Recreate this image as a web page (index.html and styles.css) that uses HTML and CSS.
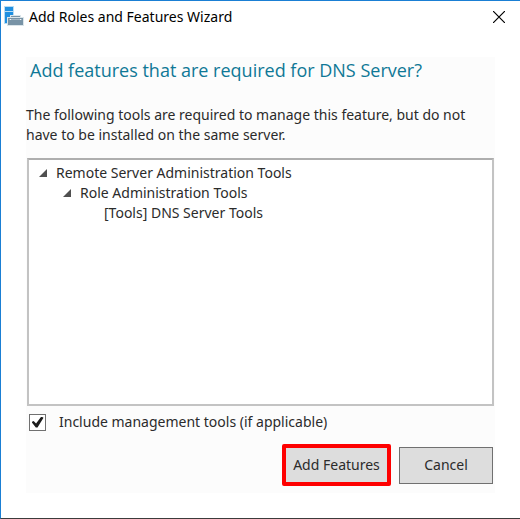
FILE: index.html
```html
<!DOCTYPE html>
<html lang="en">
<head>
<meta charset="utf-8">
<meta name="viewport" content="width=device-width, initial-scale=1">
<title>Add Roles and Features Wizard</title>
<link rel="stylesheet" href="styles.css">
</head>
<body>
<div class="window">
  <header class="titlebar">
    <svg class="app-icon" width="20" height="20" viewBox="0 0 20 20" aria-hidden="true">
      <path fill="#b9dcf3" d="M0 0h10v18H0z"/>
      <path fill="#1f8fe0" d="M1 1h8v4H1zM1 6h8v11H1z"/>
      <path fill="#dbe5ea" d="M6 9h11v2h3v9H3v-9h3z"/>
      <path fill="#7893a6" d="M7 10h9v1H7zM4 12h15v7H4z"/>
      <path fill="#a3b5c1" d="M5 13h13v1H5z"/>
      <path fill="#f3f6f8" d="M6 13h1v1H6zM16 13h1v1h-1z"/>
    </svg>
    <span class="title">Add Roles and Features Wizard</span>
    <button class="close" type="button" aria-label="Close">
      <svg width="12" height="12" viewBox="0 0 12 12" aria-hidden="true"><path d="M0 0l12 12M12 0L0 12" stroke="#000" stroke-width="1.2"/></svg>
    </button>
  </header>
  <main class="panel">
    <h1 class="heading">Add features that are required for DNS Server?</h1>
    <p class="message">The following tools are required to manage this feature, but do not have to be installed on the same server.</p>
    <div class="tree">
      <ul class="branch">
        <li>
          <div class="node"><svg class="arrow" width="8" height="8" viewBox="0 0 8 8" aria-hidden="true"><path d="M0 8L8 0v8z"/></svg>Remote Server Administration Tools</div>
          <ul class="branch">
            <li>
              <div class="node"><svg class="arrow" width="8" height="8" viewBox="0 0 8 8" aria-hidden="true"><path d="M0 8L8 0v8z"/></svg>Role Administration Tools</div>
              <ul class="branch">
                <li><div class="node leaf">[Tools] DNS Server Tools</div></li>
              </ul>
            </li>
          </ul>
        </li>
      </ul>
    </div>
    <label class="option"><input class="check" type="checkbox" checked>Include management tools (if applicable)</label>
    <div class="actions">
      <button class="button primary" type="button">Add Features</button>
      <button class="button" type="button">Cancel</button>
    </div>
  </main>
</div>
</body>
</html>
```
FILE: styles.css
```css
* {
  box-sizing: border-box;
}

body {
  margin: 0;
  background: #fff;
  color: #2b2b2b;
  font: 14px/20px "Noto Sans", "Open Sans", sans-serif;
}

button {
  font: inherit;
  color: inherit;
}

.window {
  display: flex;
  flex-direction: column;
  min-height: 100vh;
  padding: 0 25px 25px;
  border: 1px solid #1a7fd4;
  border-right: 0;
  border-bottom-color: #3c3c3c;
}

.titlebar {
  display: flex;
  align-items: center;
  height: 32px;
  margin: 0 -10px 24px -22px;
  color: #000;
}

.app-icon {
  margin: 0 5px 2px 0;
}

.title {
  flex: 1;
}

.close {
  display: flex;
  padding: 0;
  border: 0;
  background: none;
}

.panel {
  display: flex;
  flex: 1;
  flex-direction: column;
  padding: 0 1px 7px;
  background: #fcfcfc;
}

.heading {
  margin: 0 3px 22px;
  color: #0f7896;
  font-family: "Open Sans", "Noto Sans", sans-serif;
  font-size: 18px;
  font-weight: 400;
  line-height: 26px;
}

.message {
  margin: 0 0 13px -1px;
}

.tree {
  flex: 1;
  min-height: 64px;
  padding: 3px 10px;
  border: 2px solid #c3c3c3;
  border-top-color: #aeaeae;
  background: #fff;
}

.branch {
  margin: 0;
  padding: 0;
  list-style: none;
}

.branch .branch {
  padding-left: 24px;
}

.node {
  display: flex;
  align-items: center;
}

.arrow {
  margin-right: 9px;
  fill: #505050;
}

.leaf {
  padding-left: 17px;
}

.option {
  display: flex;
  align-items: center;
  margin: 6px 2px 12px;
}

.check {
  display: grid;
  place-items: center;
  width: 17px;
  height: 17px;
  margin: 0 13px 0 0;
  border: 1px solid #707070;
  background: #fff;
  appearance: none;
}

.check:checked::before {
  content: "";
  width: 12px;
  height: 11px;
  background: #1c1c1c;
  clip-path: polygon(0 50%, 18% 42%, 38% 64%, 82% 0, 100% 12%, 50% 100%, 36% 100%);
}

.actions {
  display: flex;
  align-items: center;
  justify-content: flex-end;
  gap: 8px;
  margin-right: 1px;
}

.button {
  min-width: 94px;
  height: 37px;
  padding: 0 8px;
  border: 1px solid #707070;
  background: #ddd;
}

.primary {
  min-width: 109px;
  height: 42px;
  padding: 0 5px;
  border: 4px solid #fe0000;
  border-radius: 2px;
}
```
